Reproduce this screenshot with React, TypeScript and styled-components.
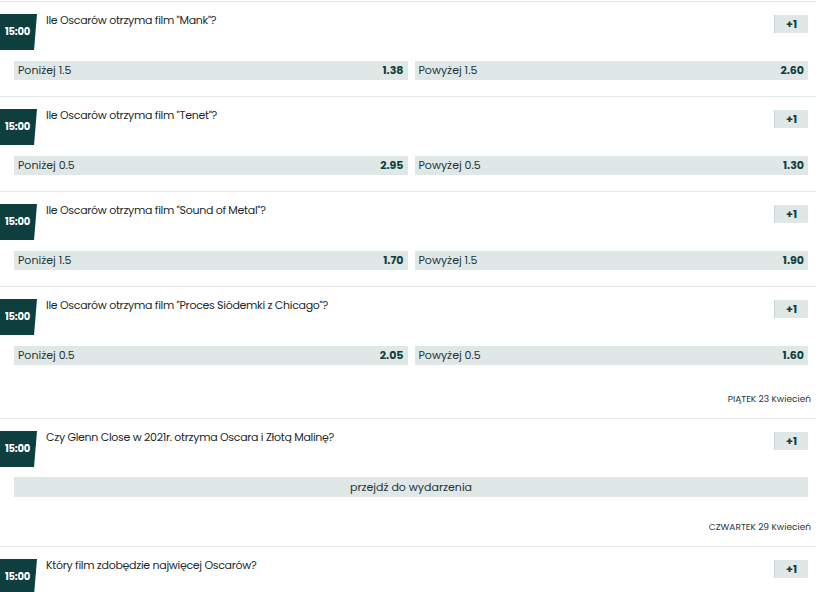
import styled, {createGlobalStyle} from "styled-components";

interface Odd {
    label: string;
    value: string;
}

interface Market {
    time: string;
    title: string;
    odds?: Odd[];
    link?: string;
    dateAfter?: string;
}

const markets: Market[] = [
    {
        time: '15:00',
        title: 'Ile Oscarów otrzyma film "Mank"?',
        odds: [{label: 'Poniżej 1.5', value: '1.38'}, {label: 'Powyżej 1.5', value: '2.60'}],
    },
    {
        time: '15:00',
        title: 'Ile Oscarów otrzyma film "Tenet"?',
        odds: [{label: 'Poniżej 0.5', value: '2.95'}, {label: 'Powyżej 0.5', value: '1.30'}],
    },
    {
        time: '15:00',
        title: 'Ile Oscarów otrzyma film "Sound of Metal"?',
        odds: [{label: 'Poniżej 1.5', value: '1.70'}, {label: 'Powyżej 1.5', value: '1.90'}],
    },
    {
        time: '15:00',
        title: 'Ile Oscarów otrzyma film "Proces Siódemki z Chicago"?',
        odds: [{label: 'Poniżej 0.5', value: '2.05'}, {label: 'Powyżej 0.5', value: '1.60'}],
        dateAfter: 'PIĄTEK 23 Kwiecień',
    },
    {
        time: '15:00',
        title: 'Czy Glenn Close w 2021r. otrzyma Oscara i Złotą Malinę?',
        link: 'przejdź do wydarzenia',
        dateAfter: 'CZWARTEK 29 Kwiecień',
    },
    {
        time: '15:00',
        title: 'Który film zdobędzie najwięcej Oscarów?',
    },
];

export default function App() {
    return <>
        <GlobalStyle/>
        <List>
            {markets.map((m, i) => <div key={i}>
                <Event $compact={!!m.link}>
                    <Header>
                        <TimeBadge>{m.time}</TimeBadge>
                        <Title>{m.title}</Title>
                        <MoreButton>+1</MoreButton>
                    </Header>
                    {m.odds && <OddsRow>
                        {m.odds.map(o => <OddButton key={o.label}>
                            <span>{o.label}</span>
                            <OddValue>{o.value}</OddValue>
                        </OddButton>)}
                    </OddsRow>}
                    {m.link && <EventLink>{m.link}</EventLink>}
                </Event>
                {m.dateAfter && <DateRow>{m.dateAfter}</DateRow>}
            </div>)}
        </List>
    </>
}

const GlobalStyle = createGlobalStyle`
    html, body {
        margin: 0;
        padding: 0;
        background: #fff;
        overflow: hidden;
    }

    body {
        font-family: "Poppins", "Open Sans", sans-serif;
        color: #1d2c2d;
    }
`

const List = styled.section`
    padding-top: 1px;
    width: 816px;
`

const Event = styled.article<{ $compact: boolean }>`
    border-top: 1px solid #e1e8e8;
    padding: 12px 8px ${p => p.$compact ? '12px' : '16px'} 0;
`

const Header = styled.div`
    display: flex;
    align-items: flex-start;
    height: 36px;
`

const TimeBadge = styled.div`
    flex: 0 0 37px;
    height: 36px;
    display: flex;
    align-items: center;
    padding-left: 5px;
    box-sizing: border-box;
    background: #0f3e3f;
    color: #fff;
    font-size: 10px;
    font-weight: 700;
    letter-spacing: -0.2px;
    clip-path: polygon(0 0, 100% 0, 92% 100%, 0 100%);
`

const Title = styled.p`
    flex: 1;
    margin: -1px 0 0 9px;
    font-size: 11px;
    line-height: 14px;
    letter-spacing: -0.3px;
    color: #1b2a2b;
`

const MoreButton = styled.button`
    width: 34px;
    height: 18px;
    margin-top: 1px;
    padding: 0;
    border: none;
    border-left: 1px solid #cbd4d4;
    background: #e0e7e7;
    color: #0f3e3f;
    font-family: inherit;
    font-size: 11px;
    font-weight: 700;
`

const OddsRow = styled.div`
    display: grid;
    grid-template-columns: 1fr 1fr;
    gap: 7px;
    margin: 11px 0 0 14px;
`

const OddButton = styled.div`
    display: flex;
    align-items: center;
    justify-content: space-between;
    height: 19px;
    padding: 0 4px;
    background: #dfe7e7;
    font-size: 11px;
    color: #1d3536;
`

const OddValue = styled.span`
    font-weight: 700;
    color: #0f3e3f;
`

const EventLink = styled.div`
    height: 20px;
    margin: 10px 0 0 14px;
    display: flex;
    align-items: center;
    justify-content: center;
    background: #dfe7e7;
    font-size: 11px;
    color: #1d3536;
`

const DateRow = styled.div`
    height: 37px;
    display: flex;
    align-items: center;
    justify-content: flex-end;
    padding-right: 5px;
    font-size: 9px;
    color: #1e3a3c;
`
